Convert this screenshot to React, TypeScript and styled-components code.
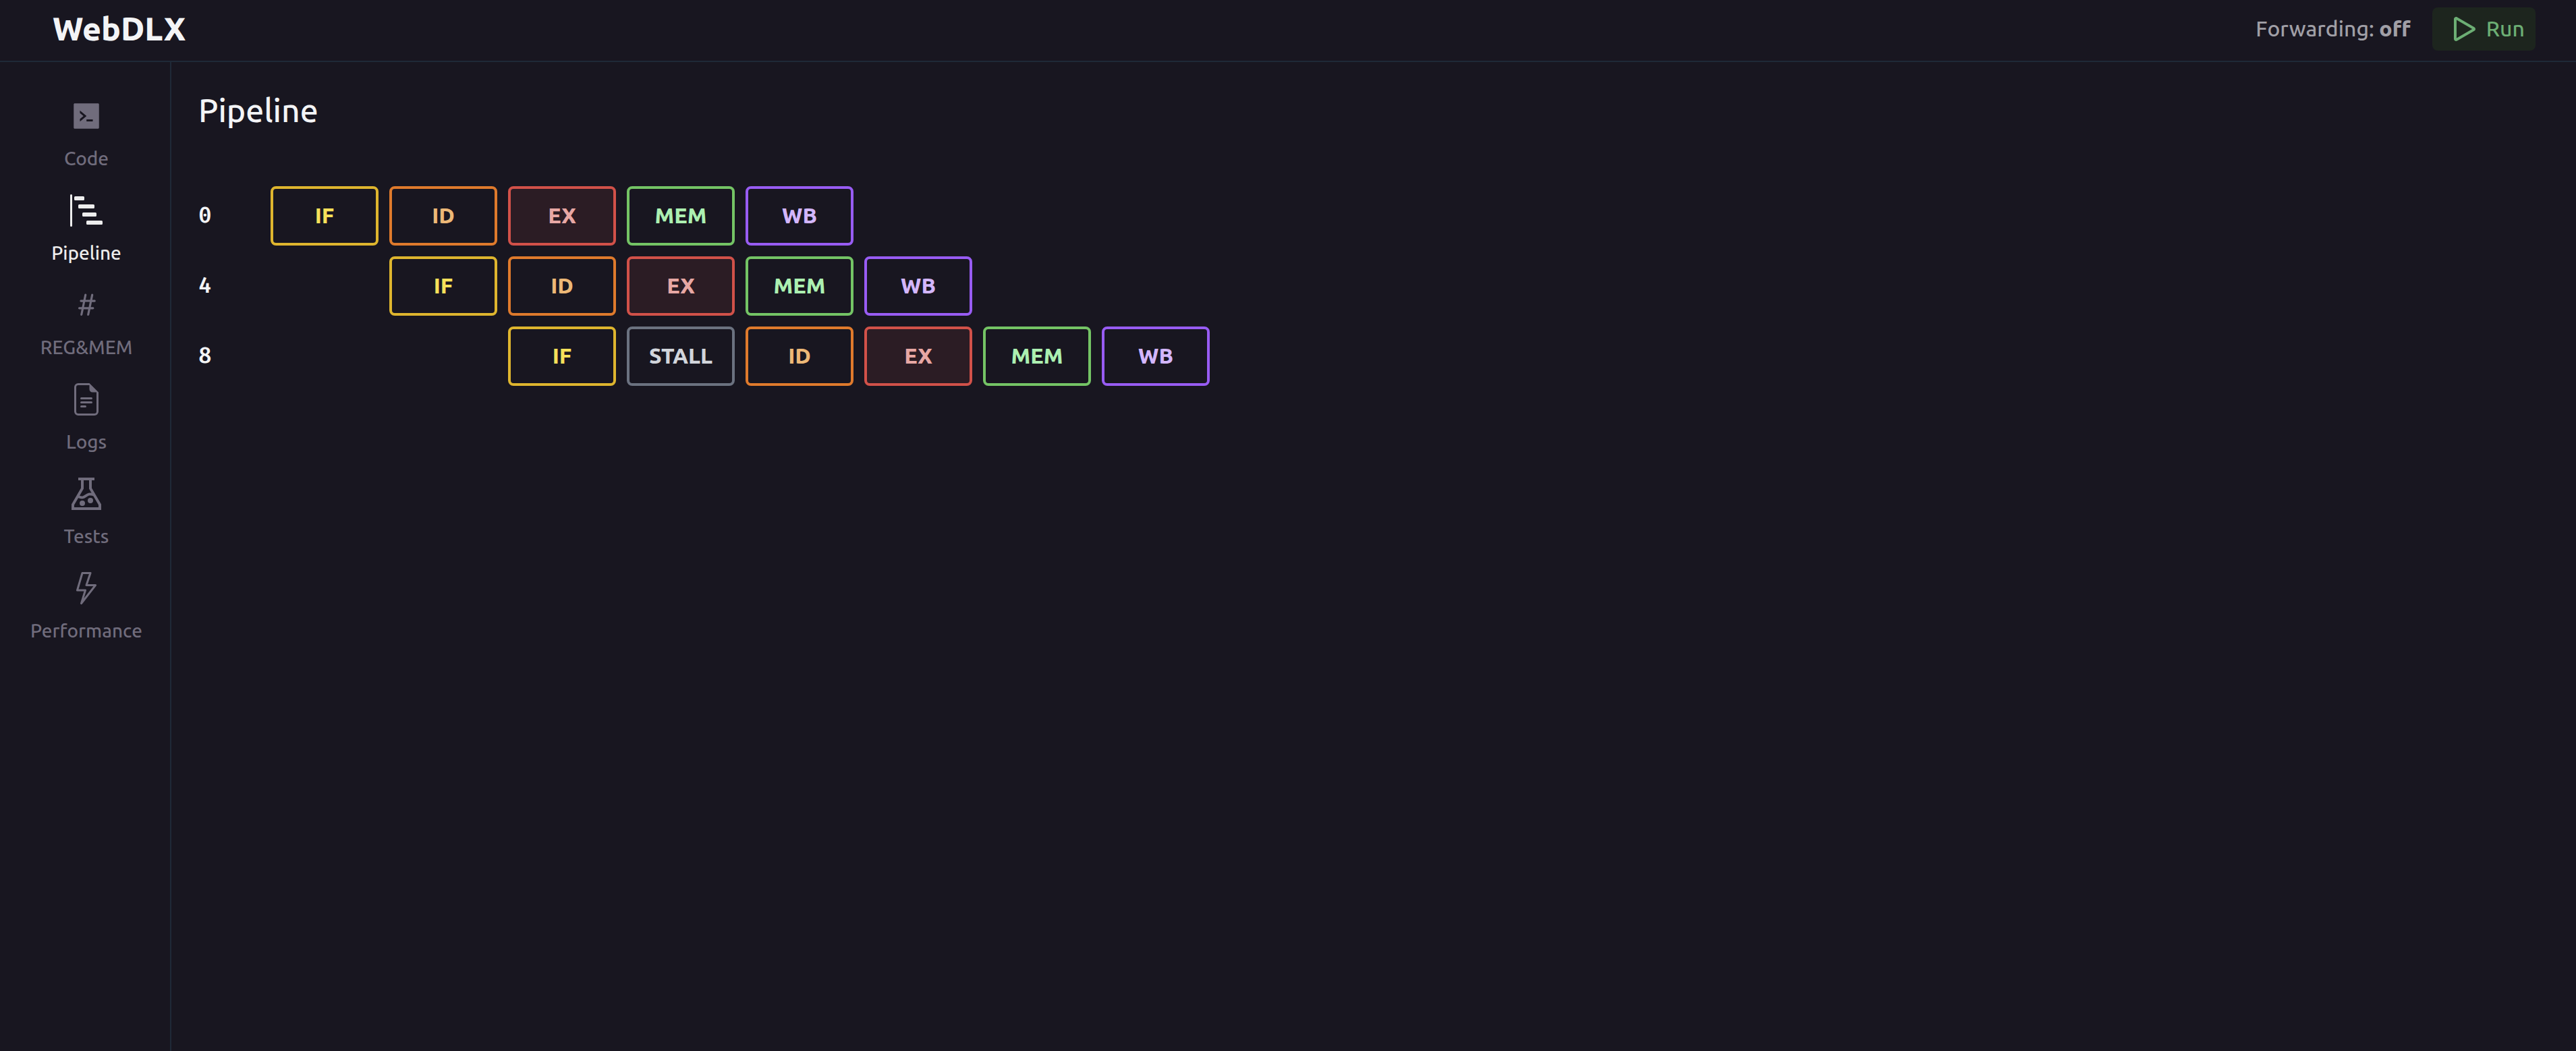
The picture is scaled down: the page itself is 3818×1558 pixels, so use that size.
import React from "react";
import styled, { createGlobalStyle } from "styled-components";
import { BsBarChartSteps, BsFileEarmarkText, BsHash, BsLightning, BsPlay } from "react-icons/bs";
import { AiFillCode } from "react-icons/ai";
import { GrTest } from "react-icons/gr";

const GlobalStyle = createGlobalStyle`
  *, *::before, *::after { box-sizing: border-box; }
  body {
    margin: 0;
    background: #181620;
    color: #f3f4f6;
    font-family: Ubuntu, "Noto Sans", "Open Sans", sans-serif;
    font-size: 32px;
    font-weight: 500;
    line-height: 46px;
  }
`;

const Page = styled.div`
  display: flex;
  flex-direction: column;
  min-height: 100vh;
`;

const Header = styled.header`
  display: flex;
  align-items: center;
  justify-content: space-between;
  height: 92px;
  padding: 0 60px 4px 78px;
  border-bottom: 2px solid #1f2937;
`;

const Brand = styled.h1`
  margin: 0;
  padding-bottom: 2px;
  font-size: 48px;
  line-height: 62px;
  font-weight: 800;
`;

const Actions = styled.div`
  display: flex;
  align-items: center;
  gap: 32px;
`;

const Forwarding = styled.p`
  margin: 0;
  padding-bottom: 2px;
  color: #a09fa6;

  b { font-weight: 800; }
`;

const RunButton = styled.button`
  display: flex;
  align-items: center;
  height: 64px;
  padding: 0 16px;
  border: 0;
  border-radius: 8px;
  background: #1d251e;
  color: #6cae74;
  font: inherit;
  cursor: pointer;
`;

const RunLabel = styled.span`
  padding-bottom: 2px;
`;

const Body = styled.div`
  display: flex;
  flex: 1;
`;

const Sidebar = styled.nav`
  display: flex;
  flex-direction: column;
  flex: none;
  gap: 8px;
  width: 254px;
  padding: 52px 0 0 4px;
  border-right: 2px solid #1f2937;
`;

const NavLink = styled.a<{ $active?: boolean }>`
  display: flex;
  flex-direction: column;
  align-items: center;
  gap: 20px;
  height: 132px;
  padding-top: 4px;
  color: ${(p) => (p.$active ? "#ededed" : "#706c7c")};
  font-size: 28px;
  line-height: 38px;
  text-decoration: none;
`;

const Main = styled.main`
  flex: 1;
  min-width: 0;
  padding: 40px;
`;

const Title = styled.h2`
  margin: 0 0 66px;
  font-size: 48px;
  line-height: 62px;
  font-weight: 500;
`;

const Timeline = styled.table`
  margin: 0 -16px;
  border-collapse: separate;
  border-spacing: 16px;
  table-layout: fixed;
`;

const Address = styled.th`
  width: 91px;
  padding: 0;
  text-align: left;
  font-family: "Fira Code", "Noto Sans Mono", "DejaVu Sans Mono", monospace;
  font-feature-settings: "zero";
  font-weight: 600;
`;

const Slot = styled.td`
  width: 160px;
  height: 88px;
  padding: 0;
`;

type StageName = "IF" | "ID" | "EX" | "MEM" | "WB" | "STALL";

const stageColors: Record<StageName, { line: string; text: string; fill: string }> = {
  IF: { line: "#deb52e", text: "#f6e05a", fill: "transparent" },
  ID: { line: "#df7a2c", text: "#edb877", fill: "transparent" },
  EX: { line: "#d15149", text: "#e7a7a4", fill: "#2b1c24" },
  MEM: { line: "#74c465", text: "#acf0b1", fill: "transparent" },
  WB: { line: "#985cf3", text: "#d3b6fc", fill: "transparent" },
  STALL: { line: "#6b7280", text: "#d1d5db", fill: "transparent" },
};

const Stage = styled.div<{ $stage: StageName }>`
  display: flex;
  align-items: center;
  justify-content: center;
  height: 88px;
  padding-bottom: 2px;
  border: 4px solid ${(p) => stageColors[p.$stage].line};
  border-radius: 8px;
  background: ${(p) => stageColors[p.$stage].fill};
  color: ${(p) => stageColors[p.$stage].text};
  font-weight: 800;
`;

const navItems = [
  { label: "Code", icon: AiFillCode },
  { label: "Pipeline", icon: BsBarChartSteps, active: true },
  { label: "REG&MEM", icon: BsHash },
  { label: "Logs", icon: BsFileEarmarkText },
  { label: "Tests", icon: GrTest },
  { label: "Performance", icon: BsLightning },
];

const instructions: { address: number; start: number; stages: StageName[] }[] = [
  { address: 0, start: 0, stages: ["IF", "ID", "EX", "MEM", "WB"] },
  { address: 4, start: 1, stages: ["IF", "ID", "EX", "MEM", "WB"] },
  { address: 8, start: 2, stages: ["IF", "STALL", "ID", "EX", "MEM", "WB"] },
];

const cycles = Math.max(...instructions.map((i) => i.start + i.stages.length));

export default function App() {
  return (
    <>
      <GlobalStyle />
      <Page>
        <Header>
          <Brand>WebDLX</Brand>
          <Actions>
            <Forwarding>
              Forwarding: <b>off</b>
            </Forwarding>
            <RunButton type="button">
              <BsPlay size={64} aria-hidden />
              <RunLabel>Run</RunLabel>
            </RunButton>
          </Actions>
        </Header>
        <Body>
          <Sidebar>
            {navItems.map(({ label, icon: Icon, active }) => (
              <NavLink key={label} href="#" $active={active} aria-current={active ? "page" : undefined}>
                <Icon size={48} aria-hidden />
                {label}
              </NavLink>
            ))}
          </Sidebar>
          <Main>
            <Title>Pipeline</Title>
            <Timeline>
              <tbody>
                {instructions.map(({ address, start, stages }) => (
                  <tr key={address}>
                    <Address scope="row">{address}</Address>
                    {Array.from({ length: cycles }, (_, cycle) => {
                      const stage = stages[cycle - start];
                      return <Slot key={cycle}>{stage && <Stage $stage={stage}>{stage}</Stage>}</Slot>;
                    })}
                  </tr>
                ))}
              </tbody>
            </Timeline>
          </Main>
        </Body>
      </Page>
    </>
  );
}
